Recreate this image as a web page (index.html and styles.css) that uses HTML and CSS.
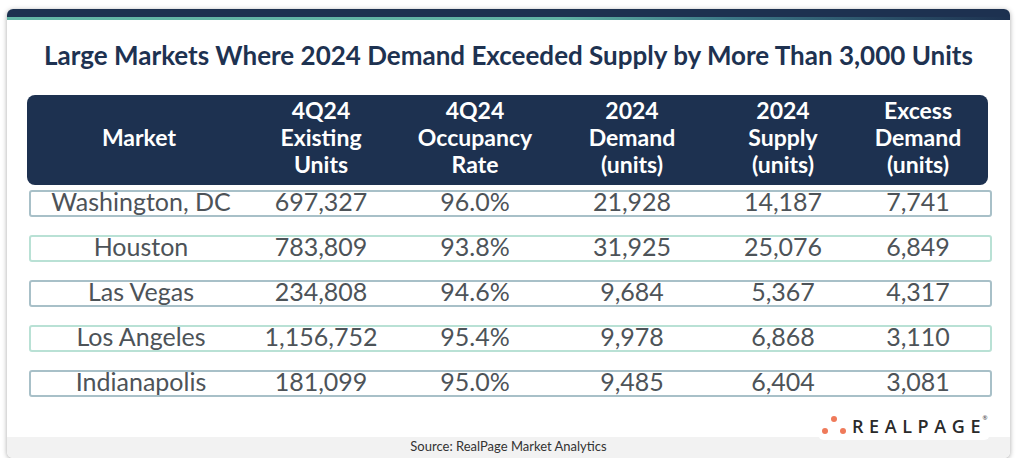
FILE: index.html
```html
<!DOCTYPE html>
<html lang="en">
<head>
<meta charset="utf-8">
<title>Large Markets Where 2024 Demand Exceeded Supply</title>
<link rel="stylesheet" href="styles.css">
</head>
<body>
<div class="card">
  <div class="topbar"><div class="accent"></div></div>
  <h1 class="title">Large Markets Where 2024 Demand Exceeded Supply by More Than 3,000 Units</h1>
  <div class="thead">
    <div class="th"><span>Market</span></div>
    <div class="th"><span>4Q24<br>Existing<br>Units</span></div>
    <div class="th"><span>4Q24<br>Occupancy<br>Rate</span></div>
    <div class="th"><span>2024<br>Demand<br>(units)</span></div>
    <div class="th"><span>2024<br>Supply<br>(units)</span></div>
    <div class="th"><span>Excess<br>Demand<br>(units)</span></div>
  </div>
  <div class="rows">
    <div class="row blue">
      <div class="td">Washington, DC</div>
      <div class="td">697,327</div>
      <div class="td">96.0%</div>
      <div class="td">21,928</div>
      <div class="td">14,187</div>
      <div class="td">7,741</div>
    </div>
    <div class="row mint">
      <div class="td">Houston</div>
      <div class="td">783,809</div>
      <div class="td">93.8%</div>
      <div class="td">31,925</div>
      <div class="td">25,076</div>
      <div class="td">6,849</div>
    </div>
    <div class="row blue">
      <div class="td">Las Vegas</div>
      <div class="td">234,808</div>
      <div class="td">94.6%</div>
      <div class="td">9,684</div>
      <div class="td">5,367</div>
      <div class="td">4,317</div>
    </div>
    <div class="row mint">
      <div class="td">Los Angeles</div>
      <div class="td">1,156,752</div>
      <div class="td">95.4%</div>
      <div class="td">9,978</div>
      <div class="td">6,868</div>
      <div class="td">3,110</div>
    </div>
    <div class="row blue">
      <div class="td">Indianapolis</div>
      <div class="td">181,099</div>
      <div class="td">95.0%</div>
      <div class="td">9,485</div>
      <div class="td">6,404</div>
      <div class="td">3,081</div>
    </div>
  </div>
  <div class="logo">
    <svg class="dots" width="26" height="20" viewBox="0 0 26 20" aria-hidden="true">
      <circle cx="13" cy="4" r="3" fill="#ef7a5a"/>
      <circle cx="4" cy="16" r="3" fill="#ef7a5a"/>
      <circle cx="22" cy="16" r="3" fill="#ef7a5a"/>
    </svg>
    <span class="brand">REALPAG<span class="last">E</span></span>
    <span class="tm">®</span>
  </div>
  <div class="footer">Source: RealPage Market Analytics</div>
</div>
</body>
</html>
```
FILE: styles.css
```css
* { box-sizing: border-box; }
html, body { margin: 0; padding: 0; background: #ffffff; }
body { font-family: Lato, "Open Sans", sans-serif; }

.card {
  position: relative;
  margin: 9px 0 0 7px;
  width: 1003px;
  height: 449px;
  background: #ffffff;
  border-radius: 6px;
  overflow: hidden;
  box-shadow: 0 1px 5px rgba(0, 0, 0, 0.35);
  display: flex;
  flex-direction: column;
}

.topbar {
  height: 11px;
  flex: none;
  background: #1d3150;
  display: flex;
  flex-direction: column;
  justify-content: flex-end;
}
.accent {
  height: 3px;
  background: linear-gradient(90deg, #63b6a6 0%, #60b2a4 55%, #3c7887 72%, #1d3150 100%);
}

.title {
  margin: 20px 0 0;
  height: 30px;
  font-size: 26px;
  line-height: 30px;
  font-weight: 700;
  color: #1e3251;
  text-align: center;
  white-space: nowrap;
}

.thead {
  flex: none;
  margin: 25px 0 0 20px;
  width: 961px;
  height: 90px;
  padding-top: 2px;
  background: #1d3150;
  border-radius: 8px;
  display: grid;
  grid-template-columns: 224px 140px 168px 146px 156px 114px;
  color: #ffffff;
  font-size: 23px;
  font-weight: 700;
  line-height: 27px;
}
.th {
  display: flex;
  justify-content: center;
  align-items: center;
  text-align: center;
  height: 81px;
  white-space: nowrap;
}

.rows {
  flex: none;
  margin: 5px 0 0 22px;
  width: 963px;
  display: flex;
  flex-direction: column;
  gap: 18px;
}
.row {
  height: 27px;
  border: 2px solid #a8c0c8;
  border-radius: 3px;
  display: grid;
  grid-template-columns: 220px 140px 168px 146px 156px 114px;
  align-items: start;
  font-size: 25px;
  line-height: 19px;
  color: #4d5358;
}
.row.mint { border-color: #b9e1d5; }
.td { text-align: center; white-space: nowrap; }

.logo {
  flex: none;
  position: relative;
  z-index: 1;
  margin: 11px 20px -3px auto;
  width: 172px;
  height: 32px;
  background: #ffffff;
  border-radius: 0 0 6px 6px;
  display: flex;
  align-items: flex-end;
  padding: 0 0 4px 3px;
}
.dots { display: block; margin: 0 5px 1px 0; }
.brand {
  font-family: "Open Sans", Lato, sans-serif;
  font-weight: 600;
  font-size: 18px;
  line-height: 20px;
  letter-spacing: 5.6px;
  color: #2a2a2a;
  white-space: nowrap;
}
.brand .last { letter-spacing: 0; }
.tm {
  align-self: flex-start;
  margin: 7px 0 0 2px;
  font-family: "Open Sans", sans-serif;
  font-size: 6px;
  line-height: 6px;
  color: #2a2a2a;
}

.footer {
  flex: none;
  height: 21px;
  background: #f2f2f2;
  text-align: center;
  font-size: 13px;
  line-height: 18px;
  color: #333333;
}
```
